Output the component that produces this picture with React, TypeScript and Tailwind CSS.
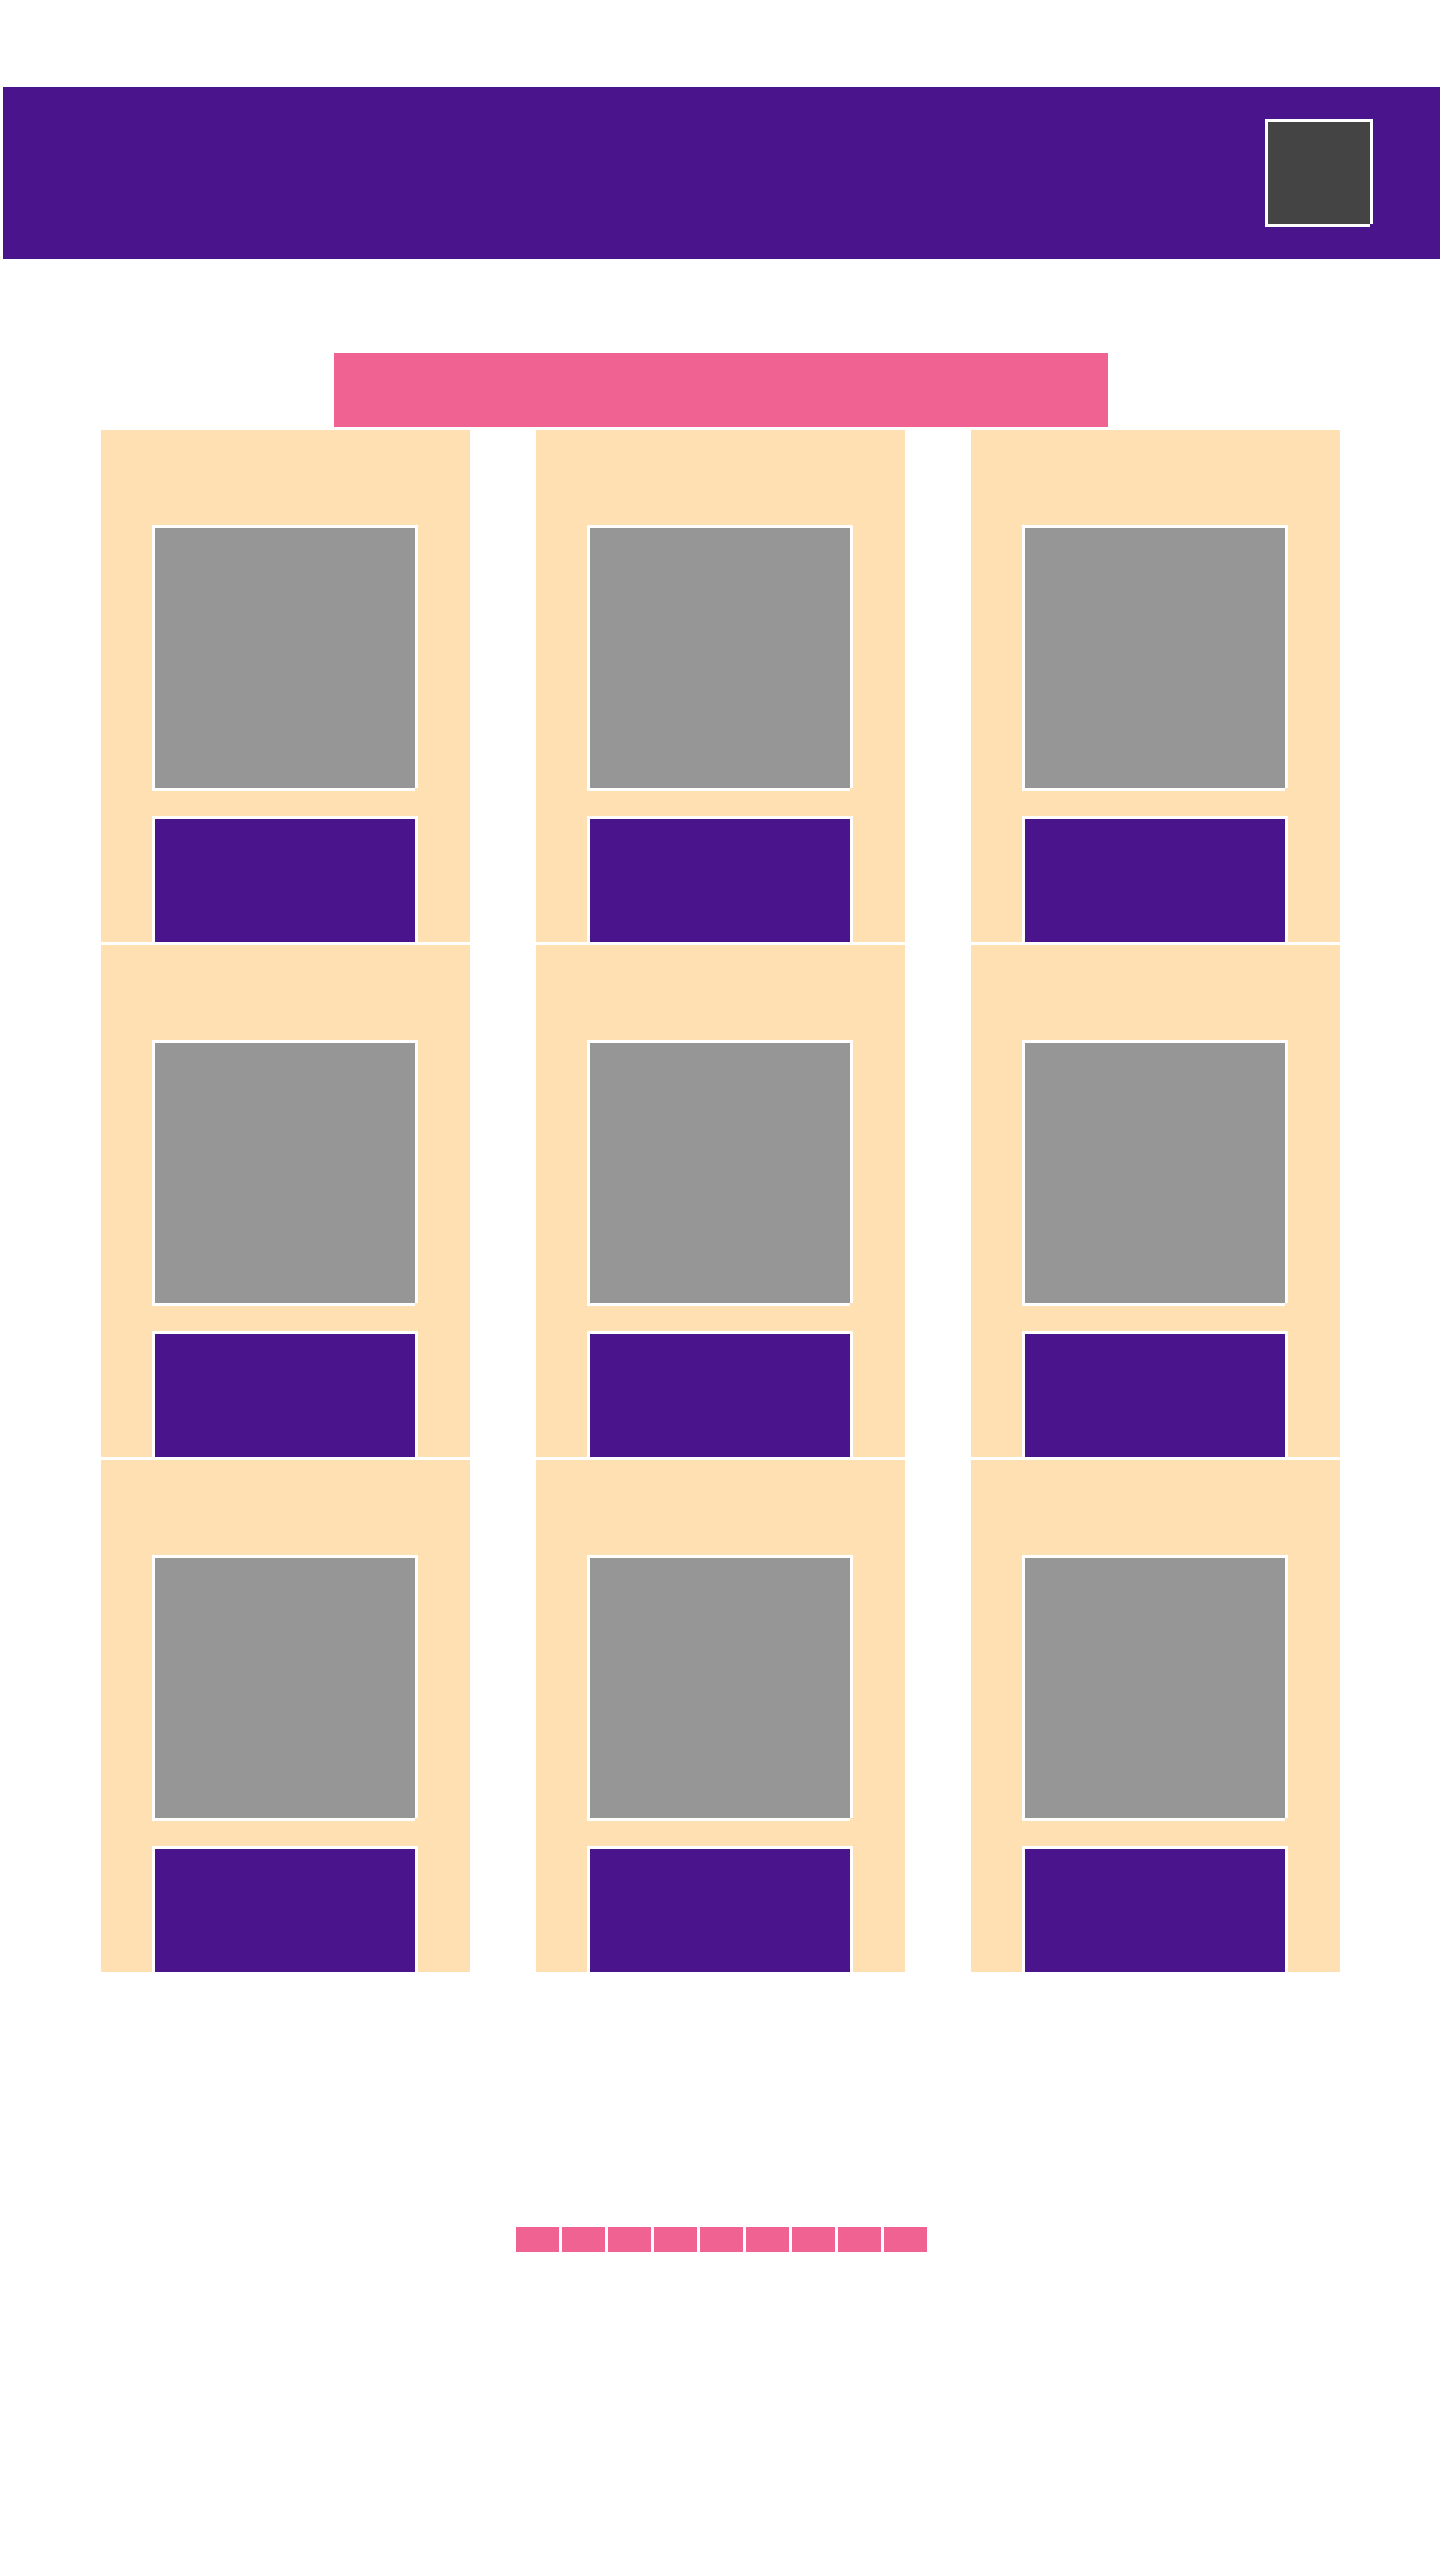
const frame =
  "shadow-[-3px_-3px_0_#fff,3px_-3px_0_#fff,3px_0_0_#fff,-3px_3px_0_#fff,0_3px_0_#fff]";

const cards = Array.from({ length: 9 }, (_, i) => i);
const pages = Array.from({ length: 9 }, (_, i) => i + 1);

const Card = () => {
  return (
    <div className="flex h-[512px] flex-col items-center overflow-hidden bg-[#fee0b2] pt-[98px]">
      <div className={`h-[260px] w-[260px] shrink-0 bg-[#969696] ${frame}`} />
      <div className={`mt-[31px] h-[200px] w-[260px] shrink-0 bg-[#4a148c] ${frame}`} />
    </div>
  );
};

const App = () => {
  return (
    <main className="min-h-screen bg-white pt-[87px] pb-[300px] font-['Liberation_Sans',sans-serif]">
      <header className="ml-[3px] flex h-[172px] items-center justify-end bg-[#4a148c] pr-[70px]">
        <button
          aria-label="menu"
          className={`h-[102px] w-[102px] bg-[#444444] ${frame}`}
        />
      </header>

      <section className="mt-[94px] flex flex-col items-center">
        <div className="ml-[2px] h-[74px] w-[774px] bg-[#f06292]" />
        <div className="mt-[3px] grid grid-cols-[369px_369px_369px] gap-x-[66px] gap-y-[3px]">
          {cards.map((c) => (
            <Card key={c} />
          ))}
        </div>
      </section>

      <nav className="mt-[255px] flex justify-center gap-[3px] pl-[2px]">
        {pages.map((p) => (
          <button key={p} aria-label={`page ${p}`} className="h-[25px] w-[43px] bg-[#f06292]" />
        ))}
      </nav>
    </main>
  );
};

export default App;
